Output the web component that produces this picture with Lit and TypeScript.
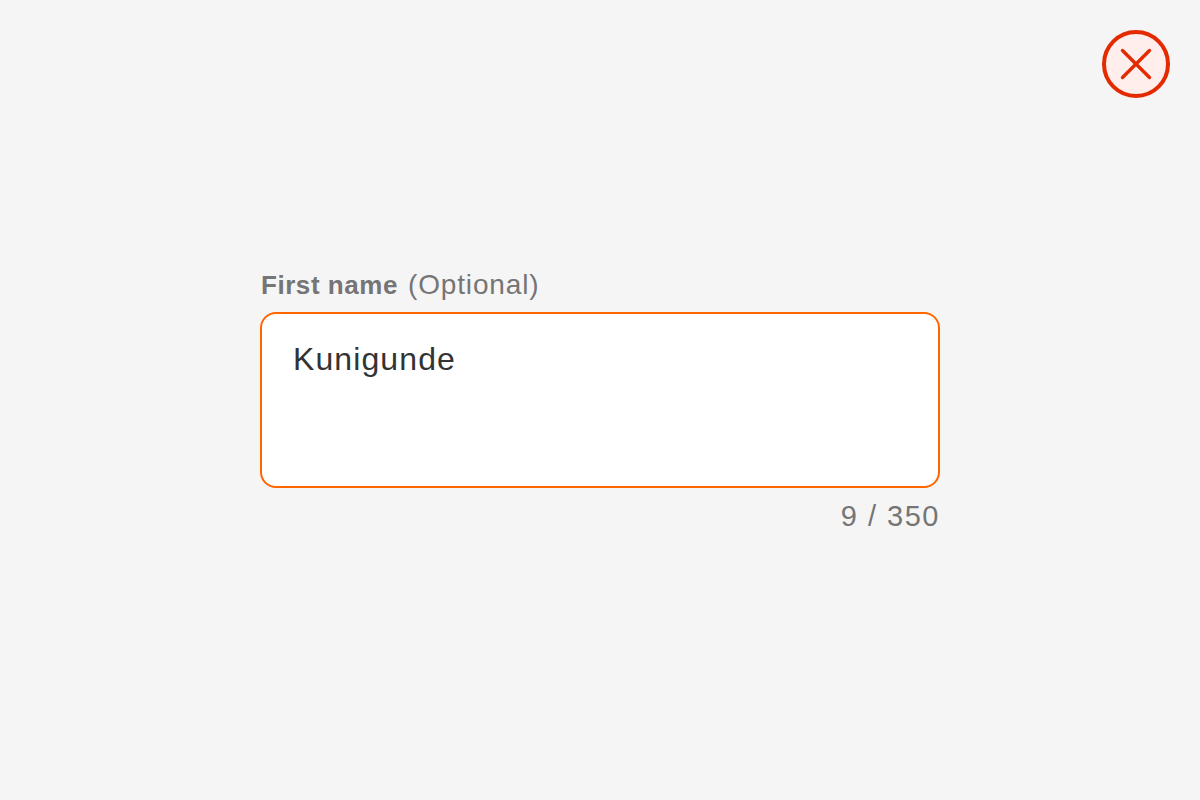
import { LitElement, html, css } from "lit";
import { customElement } from "lit/decorators.js";

@customElement("app-root")
export class AppRoot extends LitElement {
  static styles = css`
    :host {
      display: block;
      width: 1200px;
      height: 800px;
      background: #f5f5f5;
      position: relative;
      font-family: "Liberation Sans", Arial, sans-serif;
      overflow: hidden;
    }
    .page {
      height: 800px;
      display: flex;
      flex-direction: column;
      align-items: center;
      justify-content: center;
    }
    .field { width: 680px; display: flex; flex-direction: column; }
    .label {
      font-size: 28px;
      line-height: 32px;
      color: #757575;
      margin-bottom: 11px;
      letter-spacing: 0.85px;
      white-space: nowrap;
    }
    .label b { font-size: 26px; font-weight: 700; margin-left: 1px; margin-right: 10px; letter-spacing: 0.55px; }
    .box {
      box-sizing: border-box;
      height: 176px;
      background: #fff;
      border: 2px solid #ff6600;
      border-radius: 16px;
      padding: 26px 31px;
      font-size: 32px;
      line-height: 38px;
      color: #333;
      letter-spacing: 1.1px;
    }
    .count {
      margin-top: 12px;
      text-align: right;
      font-size: 29px;
      line-height: 32px;
      color: #757575;
      letter-spacing: 1.5px;
    }
    .close {
      position: absolute;
      top: 30px;
      left: 1102px;
      width: 68px;
      height: 68px;
      display: block;
    }
  `;

  render() {
    return html`
      <div class="page">
        <div class="field">
          <div class="label"><b>First name</b>(Optional)</div>
          <div class="box">Kunigunde</div>
          <div class="count">9 / 350</div>
        </div>
      </div>
      <svg class="close" viewBox="0 0 68 68" aria-label="Close">
        <circle cx="34" cy="34" r="32" fill="#ffeeec" stroke="#e32a00" stroke-width="4"></circle>
        <path d="M20.5 20.5 L47.5 47.5 M47.5 20.5 L20.5 47.5" fill="none" stroke="#e32a00" stroke-width="3.4" stroke-linecap="round"></path>
      </svg>
    `;
  }
}
